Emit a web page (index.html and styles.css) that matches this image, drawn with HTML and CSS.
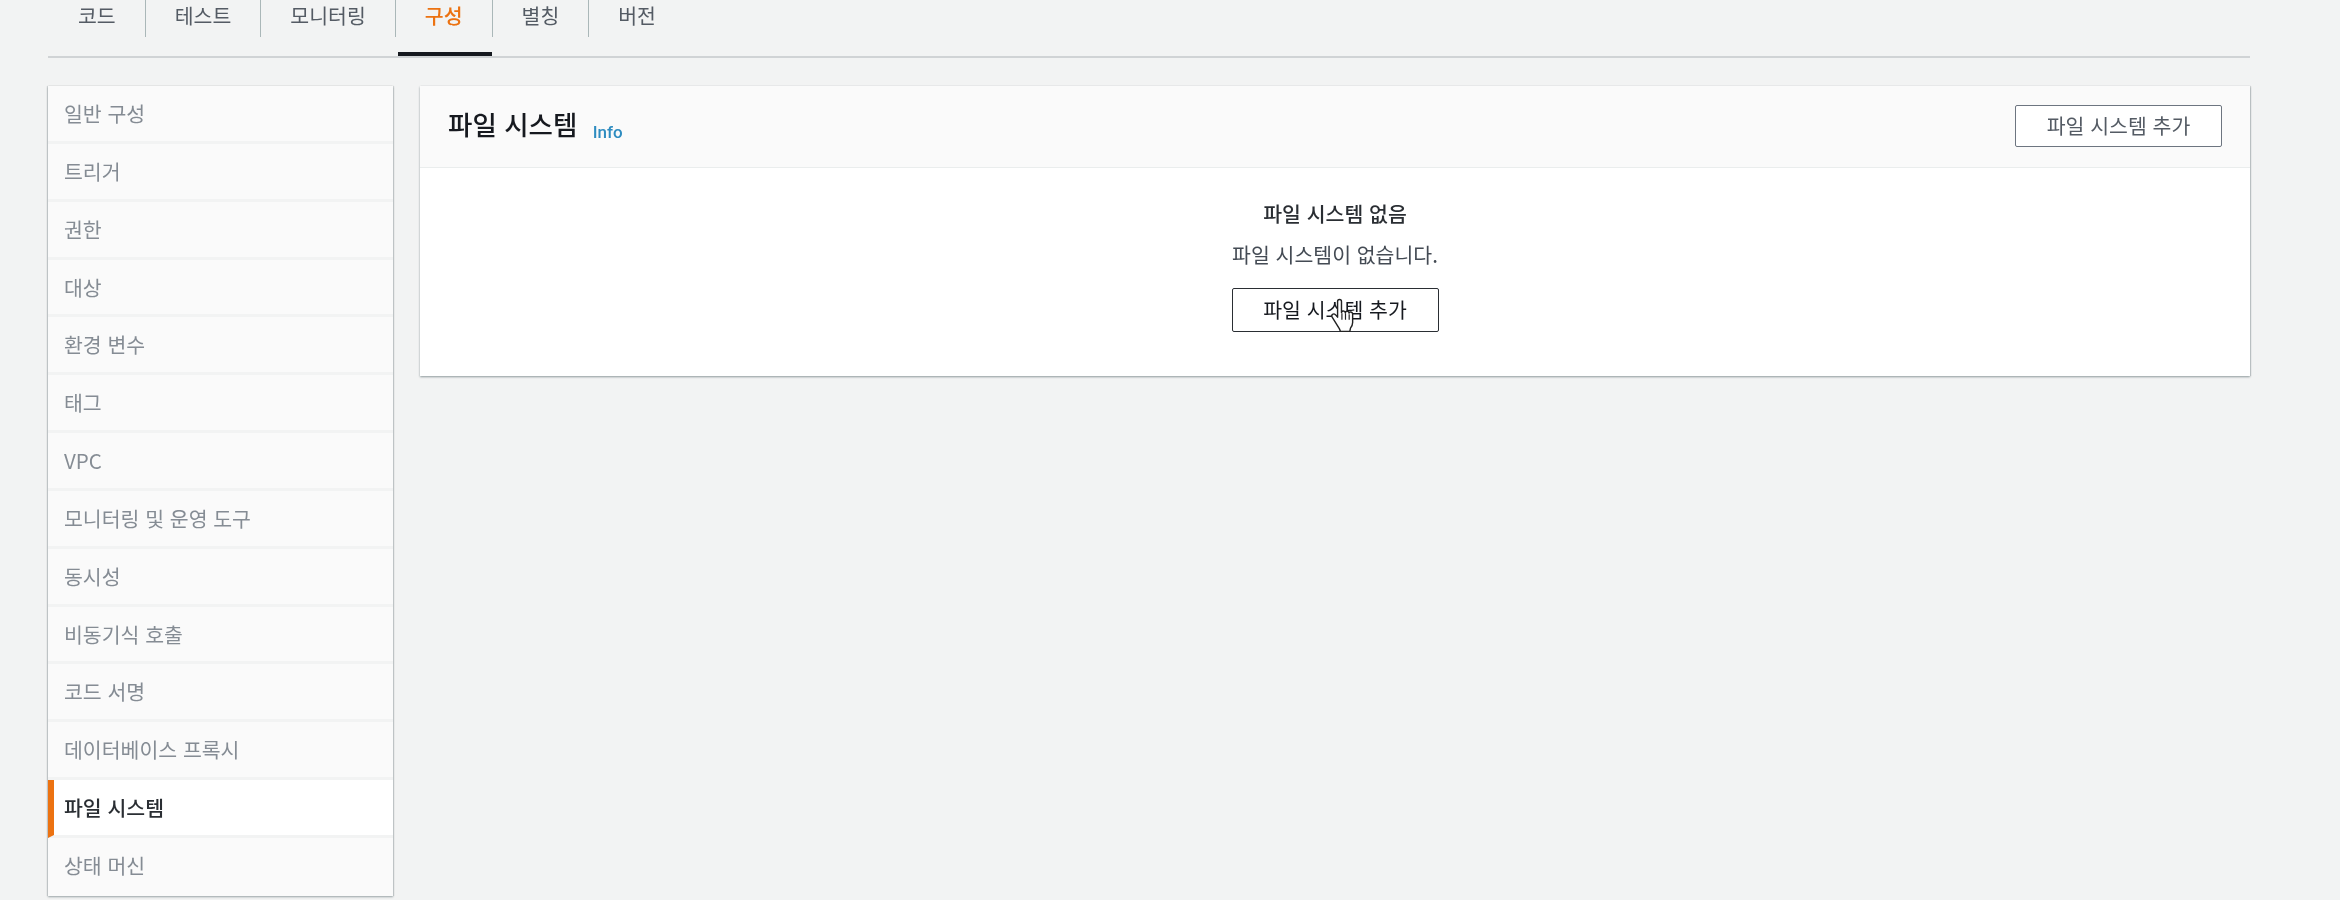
FILE: index.html
```html
<!DOCTYPE html>
<html lang="ko">
<head>
<meta charset="utf-8">
<title>파일 시스템</title>
<link rel="stylesheet" href="styles.css">
</head>
<body>
<div class="page">
  <nav class="tabs">
    <ul class="tab-list">
      <li class="tab">코드</li>
      <li class="tab">테스트</li>
      <li class="tab">모니터링</li>
      <li class="tab tab-active">구성</li>
      <li class="tab">별칭</li>
      <li class="tab">버전</li>
    </ul>
  </nav>
  <div class="layout">
    <ul class="side">
      <li class="side-item">일반 구성</li>
      <li class="side-item">트리거</li>
      <li class="side-item">권한</li>
      <li class="side-item">대상</li>
      <li class="side-item">환경 변수</li>
      <li class="side-item">태그</li>
      <li class="side-item">VPC</li>
      <li class="side-item">모니터링 및 운영 도구</li>
      <li class="side-item">동시성</li>
      <li class="side-item">비동기식 호출</li>
      <li class="side-item">코드 서명</li>
      <li class="side-item">데이터베이스 프록시</li>
      <li class="side-item side-active">파일 시스템</li>
      <li class="side-item">상태 머신</li>
    </ul>
    <section class="panel">
      <header class="panel-head">
        <h2 class="panel-title">파일 시스템 <a class="info">Info</a></h2>
        <button class="btn btn-muted">파일 시스템 추가</button>
      </header>
      <div class="empty">
        <strong class="empty-title">파일 시스템 없음</strong>
        <p class="empty-text">파일 시스템이 없습니다.</p>
        <button class="btn btn-dark">파일 시스템 추가
          <svg class="hand" viewBox="0 0 24 34" width="26" height="37" aria-hidden="true">
            <path d="M7 3.2c0-2.6 3.6-2.6 3.6 0v10.2c.2-2 3.4-2 3.5.2.2-1.9 3.4-1.9 3.5.3.3-1.700 3.300-1.300 3.300.9v7.700c0 2.200-.8 3.700-2 5.200l-.6 3H9.600l-1-2.500L2 17.600c-1.300-2.200 1.300-4 3-2.300l2 2.300z" fill="#fff" stroke="#222" stroke-width="1.300" stroke-linejoin="round"/>
            <path d="M11 14v6M14.300 14v6M17.700 15v5" fill="none" stroke="#222" stroke-width="1.100"/>
          </svg>
        </button>
      </div>
    </section>
  </div>
</div>
</body>
</html>
```
FILE: styles.css
```css
* { box-sizing: border-box; }
html, body { margin: 0; height: 100%; overflow: hidden; }
body {
  background: #f2f3f3;
  color: #16191f;
  font-family: "Noto Sans CJK KR", "Noto Sans", sans-serif;
  font-size: 20.5px;
}
.page { width: 2250px; padding-left: 48px; filter: blur(0.5px); }
.tabs { height: 58px; border-bottom: 2px solid #d0d3d5; }
.tab-list { display: flex; margin: 0; padding: 0; list-style: none; height: 56px; }
.tab {
  height: 37px;
  padding: 0 29px;
  line-height: 30px;
  color: #545b64;
  font-weight: 400;
  border-left: 1px solid #aab7b8;
  white-space: nowrap;
  position: relative;
}
.tab:first-child { border-left: 0; padding-left: 30px; }
.tab-active { color: #ec7211; font-weight: 500; }
.tab-active::after {
  content: "";
  position: absolute;
  left: 2px; right: 0; top: 52px;
  height: 4px;
  background: #16191f;
}
.layout { display: flex; gap: 27px; align-items: flex-start; padding-top: 28px; }
.side {
  width: 345px;
  margin: 0; padding: 0;
  list-style: none;
  background: #fafafa;
  box-shadow: 0 1px 2px rgba(0,28,36,.35), 1px 0 1px rgba(0,28,36,.12), -1px 0 1px rgba(0,28,36,.12);
}
.side-item {
  height: 57.85px;
  padding: 0 16px;
  line-height: 54px;
  color: #858c94;
  border-bottom: 3px solid #f2f3f3;
}
.side-item:last-child { border-bottom: 0; }
.side-active {
  background: #fff;
  color: #2a2e33;
  font-weight: 500;
  border-left: 6px solid #ec7211;
  padding-left: 10px;
}
.panel {
  flex: 1;
  background: #fff;
  box-shadow: 0 1px 2px rgba(0,28,36,.4), 1px 0 1px rgba(0,28,36,.12);
}
.panel-head {
  display: flex;
  align-items: center;
  justify-content: space-between;
  height: 82px;
  padding: 0 28px;
  background: #fafafa;
  border-bottom: 1px solid #eaeded;
}
.panel-title { margin: 0 0 6px; font-size: 26.5px; font-weight: 500; color: #16191f; }
.info { font-size: 17px; font-family: "Roboto", sans-serif; font-weight: 500; color: #2e8cc0; margin-left: 8px; vertical-align: -3px; }
.btn {
  display: block;
  width: 207px;
  height: 42px;
  padding: 0 0 2px;
  background: #fff;
  border-radius: 2px;
  font: 400 20.500px "Noto Sans CJK KR", sans-serif;
  position: relative;
}
.btn-muted { border: 1.5px solid #6d7580; color: #545b64; margin-bottom: 2px; }
.btn-dark { border: 1.5px solid #2a2e33; color: #16191f; height: 44px; }
.empty { display: flex; flex-direction: column; align-items: center; height: 208px; padding-top: 31px; }
.empty-title { font-weight: 500; color: #2a2e33; line-height: 28px; }
.empty-text { margin: 13px 0 0; line-height: 28px; color: #444b54; }
.empty-text + .btn { margin-top: 20px; }
.hand { position: absolute; left: 97px; top: 9px; }
```
